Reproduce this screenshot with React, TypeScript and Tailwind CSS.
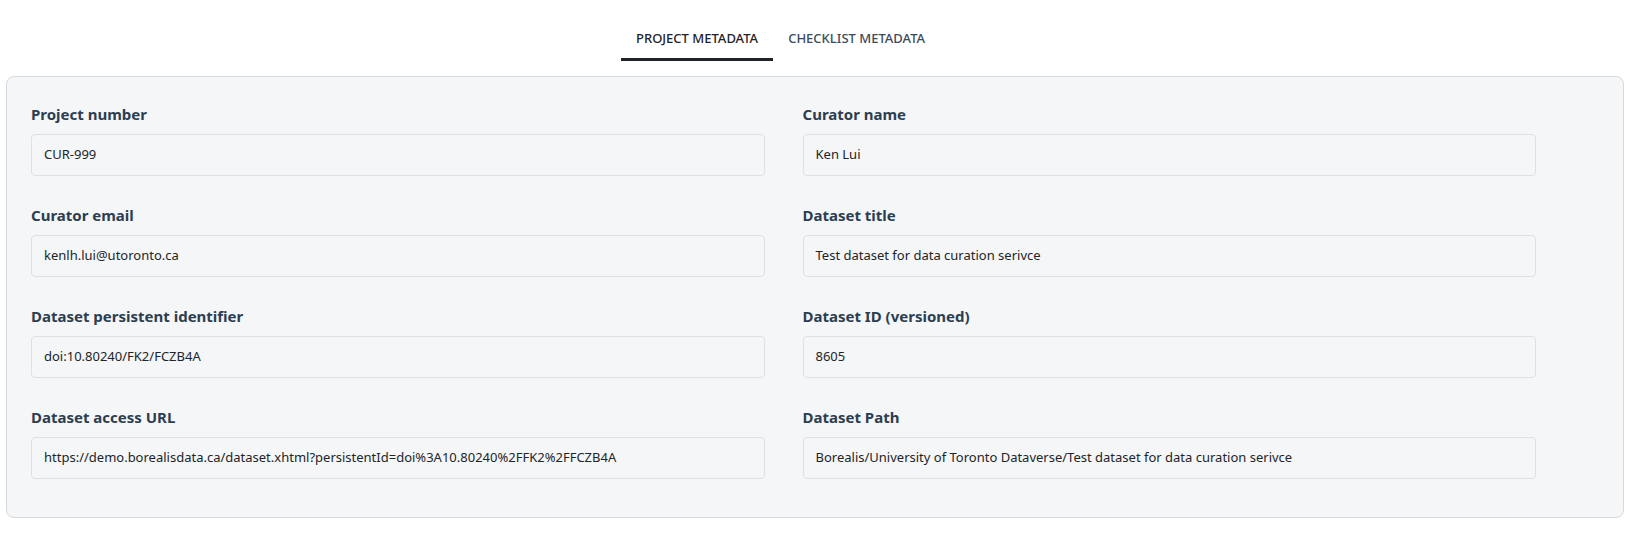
import React from "react";

const rows: [string, string][][] = [
  [["Project number", "CUR-999"], ["Curator name", "Ken Lui"]],
  [["Curator email", "kenlh.lui@utoronto.ca"], ["Dataset title", "Test dataset for data curation serivce"]],
  [["Dataset persistent identifier", "doi:10.80240/FK2/FCZB4A"], ["Dataset ID (versioned)", "8605"]],
  [
    ["Dataset access URL", "https://demo.borealisdata.ca/dataset.xhtml?persistentId=doi%3A10.80240%2FFK2%2FFCZB4A"],
    ["Dataset Path", "Borealis/University of Toronto Dataverse/Test dataset for data curation serivce"],
  ],
];

function Field({ label, value }: { label: string; value: string }) {
  return (
    <div className="flex flex-col">
      <div className="text-[15px] leading-[20px] font-bold text-[#2c3e50] h-[20px]">{label}</div>
      <div className="mt-[10px] h-[42px] rounded-[4px] border border-[#dde1e6] bg-[#f5f6f8] px-[12px] flex items-center text-[13px] text-[#212529]">
        {value}
      </div>
    </div>
  );
}

export default function App() {
  return (
    <div className="w-[1630px] h-[547px] bg-white" style={{ fontFamily: '"Noto Sans", "Open Sans", sans-serif' }}>
      <div className="flex pl-[621px] pt-[24px]">
        <div className="px-[15px] h-[37px] flex items-start pt-[5px] border-b-[3px] border-[#1f2328] text-[13px] font-medium text-[#1f2328]">
          PROJECT METADATA
        </div>
        <div className="px-[15px] h-[37px] flex items-start pt-[5px] text-[13px] font-medium text-[#3d4a5a]">
          CHECKLIST METADATA
        </div>
      </div>
      <div className="mx-[6px] mt-[15px] h-[442px] rounded-[8px] border border-[#d5d9de] bg-[#f5f6f8] pl-[24px] pr-[87px] pt-[27px]">
        <div className="flex flex-col gap-[29px]">
          {rows.map((r, i) => (
            <div key={i} className="grid grid-cols-2 gap-x-[38px]">
              <Field label={r[0][0]} value={r[0][1]} />
              <Field label={r[1][0]} value={r[1][1]} />
            </div>
          ))}
        </div>
      </div>
    </div>
  );
}
